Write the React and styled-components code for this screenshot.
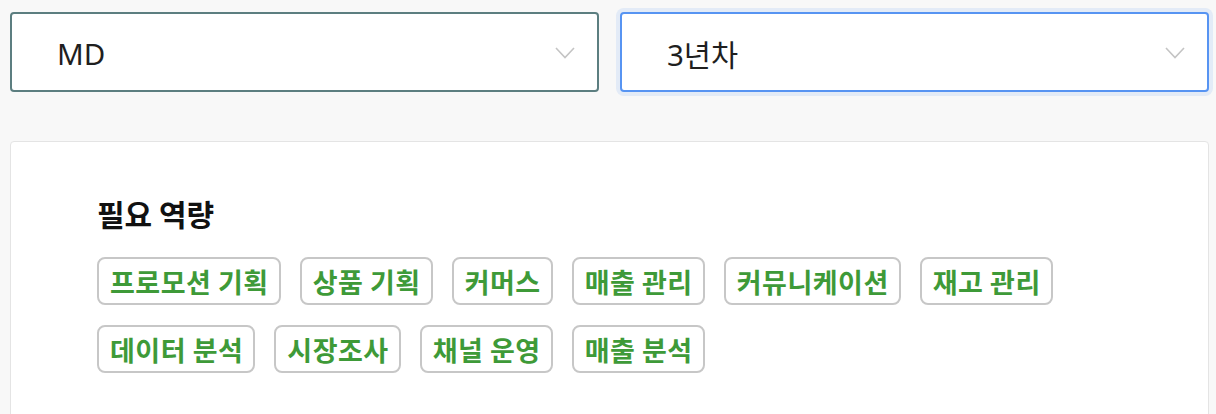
import React from "react";
import styled, { createGlobalStyle } from "styled-components";

const Global = createGlobalStyle`
  html, body { margin: 0; padding: 0; background: #f8f8f8; }
  body { font-family: "Noto Sans CJK KR", "Noto Sans", sans-serif; }
  * { box-sizing: border-box; }
`;

const Page = styled.div`
  padding: 12px 7px 0 10px;
  display: flex;
  flex-direction: column;
  gap: 49px;
`;

const SelectRow = styled.div`
  display: grid;
  grid-template-columns: 1fr 1fr;
  gap: 21px;
`;

const Select = styled.div`
  height: 80px;
  background: #fff;
  border: 2px solid ${(p) => (p.$focused ? "#5794f2" : "#5c7e80")};
  border-radius: 4px;
  box-shadow: ${(p) => (p.$focused ? "0 0 0 4px rgba(87,148,242,0.13)" : "none")};
  display: flex;
  align-items: center;
  justify-content: space-between;
  padding: 2px 22px 0 45px;
`;

const Value = styled.span`
  font-family: "Noto Sans", "Noto Sans CJK KR", sans-serif;
  font-size: 29.5px;
  color: #1f1f1f;
`;

const Chevron = () => (
  <svg width="20" height="12" viewBox="0 0 20 12">
    <path d="M1 1 L10 10.5 L19 1" fill="none" stroke="#c4c4c4" strokeWidth="1.6" />
  </svg>
);

const Card = styled.div`
  background: #fff;
  border: 1px solid #e4e4e4;
  border-radius: 4px;
  min-height: 300px;
  padding: 54px 80px 40px 86px;
`;

const Title = styled.h3`
  margin: 0 0 27px;
  font-size: 30px;
  font-weight: 700;
  color: #111;
  line-height: 34px;
`;

const TagGroup = styled.div`
  display: flex;
  flex-direction: column;
  gap: 20px;
`;

const TagRow = styled.div`
  display: flex;
  gap: 19px;
`;

const Tag = styled.span`
  height: 48px;
  display: inline-flex;
  align-items: center;
  padding: 0 10px 0 11px;
  border: 2px solid #c7c7c7;
  border-radius: 8px;
  color: #3e9a38;
  font-size: 27px;
  letter-spacing: 0.5px;
  font-weight: 700;
  white-space: nowrap;
`;

const rows = [
  ["프로모션 기획", "상품 기획", "커머스", "매출 관리", "커뮤니케이션", "재고 관리"],
  ["데이터 분석", "시장조사", "채널 운영", "매출 분석"],
];

export default function App() {
  return (
    <>
      <Global />
      <Page>
        <SelectRow>
          <Select>
            <Value>MD</Value>
            <Chevron />
          </Select>
          <Select $focused>
            <Value>3년차</Value>
            <Chevron />
          </Select>
        </SelectRow>
        <Card>
          <Title>필요 역량</Title>
          <TagGroup>
            {rows.map((r, i) => (
              <TagRow key={i}>
                {r.map((t) => (
                  <Tag key={t}>{t}</Tag>
                ))}
              </TagRow>
            ))}
          </TagGroup>
        </Card>
      </Page>
    </>
  );
}
